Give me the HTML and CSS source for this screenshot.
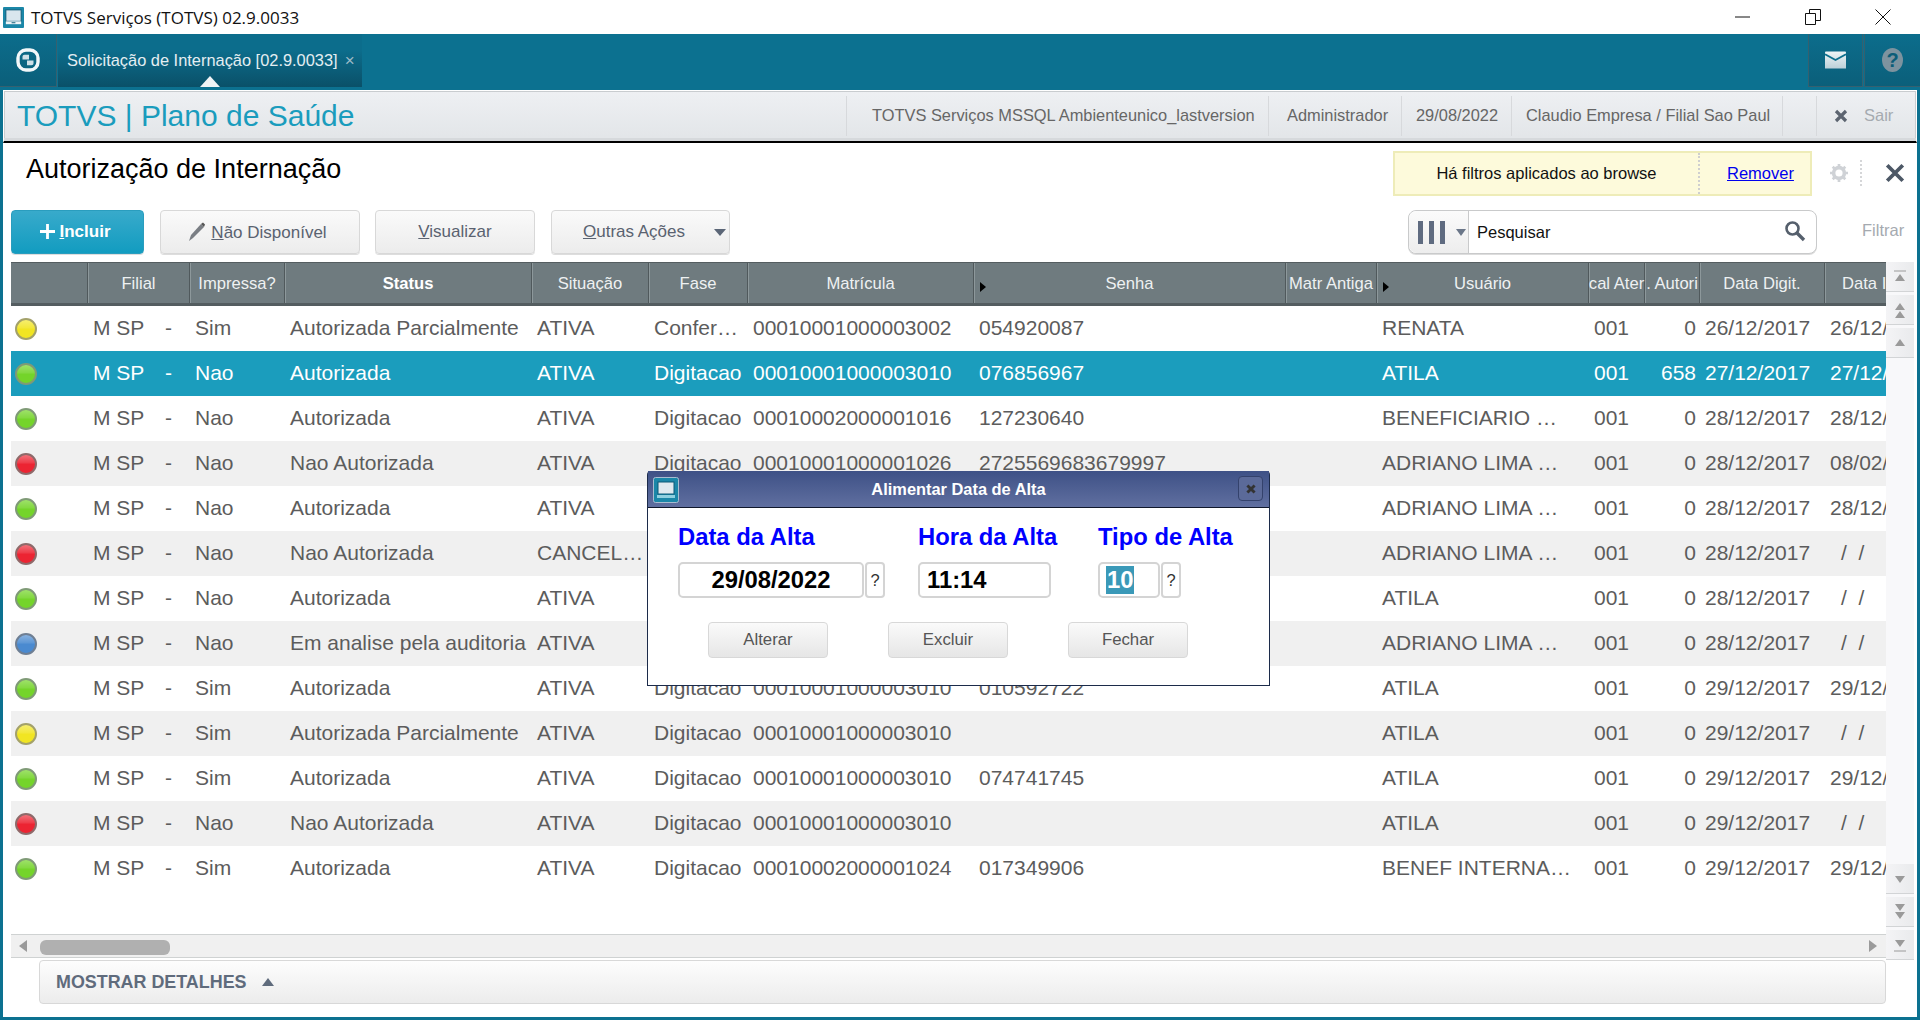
FILE: index.html
```html
<!DOCTYPE html>
<html lang="pt-BR">
<head>
<meta charset="utf-8">
<title>TOTVS Serviços (TOTVS) 02.9.0033</title>
<link rel="stylesheet" href="styles.css">
</head>
<body>
<div class="window">
  <header class="titlebar">
    <svg class="app-icon" viewBox="0 0 22 22"><rect width="22" height="22" rx="1" fill="#1b87a8"/><rect x="3" y="3" width="16" height="12" fill="#d9e6ee" stroke="#0c5b78"/><rect x="3" y="15" width="16" height="3" fill="#eef4f7"/><rect x="9" y="16" width="4" height="1" fill="#0c5b78"/></svg>
    <span class="window-title">TOTVS Serviços (TOTVS) 02.9.0033</span>
    <div class="window-controls">
      <svg viewBox="0 0 16 16" class="wc"><path d="M0 8h15" stroke="#111" fill="none"/></svg>
      <svg viewBox="0 0 16 16" class="wc"><path d="M.5 4.5h10v11H.5zM4.5 4V.5h11v11H11" stroke="#111" fill="none"/></svg>
      <svg viewBox="0 0 16 16" class="wc"><path d="M.5.5l15 15M15.5.5l-15 15" stroke="#111" fill="none"/></svg>
    </div>
  </header>

  <nav class="tabband">
    <div class="tile home">
      <svg viewBox="0 0 24 24" class="logo"><rect x="2" y="2" width="20" height="20" rx="8" fill="none" stroke="#f2f7f9" stroke-width="3.4"/><path d="M6.5 11.5V8.5Q6.5 6.8 8.5 6.8H13V11.5ZM17.5 12.5V15.5Q17.5 17.2 15.5 17.2H11V12.5Z" fill="#cfe0e7"/></svg>
    </div>
    <div class="tab">
      <span class="tab-label">Solicitação de Internação [02.9.0033]</span>
      <span class="tab-close">×</span>
    </div>
    <div class="band-fill"></div>
    <div class="tile mail">
      <svg viewBox="0 0 22 18" class="mail-icon"><defs><linearGradient id="mg" x1="0" y1="0" x2="0" y2="1"><stop offset="0" stop-color="#eef4f6"/><stop offset="1" stop-color="#bcd0d9"/></linearGradient></defs><path d="M0 1a1 1 0 0 1 1-1h20a1 1 0 0 1 1 1v17H0z" fill="url(#mg)"/><path d="M0 3l11 6 11-6" fill="none" stroke="#0c6f8d" stroke-width="2"/></svg>
    </div>
    <div class="tile help">
      <span class="help-icon">?</span>
    </div>
  </nav>

  <main class="content">
    <div class="module-bar">
      <h1 class="module-name">TOTVS | Plano de Saúde</h1>
      <div class="module-info">
        <span class="info info-env">TOTVS Serviços MSSQL Ambienteunico_lastversion</span>
        <span class="info info-user">Administrador</span>
        <span class="info info-date">29/08/2022</span>
        <span class="info info-branch">Claudio Empresa / Filial Sao Paul</span>
        <span class="info info-gap"></span>
        <span class="info-exit"><svg viewBox="0 0 14 14" class="exit-x"><path d="M2 2l10 10M12 2L2 12" stroke="#5c6470" stroke-width="3.2"/></svg>Sair</span>
      </div>
    </div>

    <section class="page-head">
      <h2 class="page-title">Autorização de Internação</h2>
      <div class="notice">
        <span class="notice-text">Há filtros aplicados ao browse</span>
        <span class="notice-link"><a href="#">Remover</a></span>
      </div>
      <svg viewBox="0 0 20 20" class="gear"><circle cx="10" cy="10" r="6" fill="none" stroke="#cfd2d6" stroke-width="4"/><path d="M10 0v4M10 16v4M0 10h4M16 10h4M3 3l3 3M14 14l3 3M17 3l-3 3M6 14l-3 3" stroke="#cfd2d6" stroke-width="3"/></svg>
      <span class="head-dots"></span>
      <svg viewBox="0 0 18 18" class="head-close"><path d="M2 2l14 14M16 2L2 16" stroke="#4d5866" stroke-width="3.4"/></svg>
    </section>

    <section class="toolbar">
      <button class="btn btn-primary"><svg viewBox="0 0 16 16" class="plus"><path d="M8 0v16M0 8h16" stroke="#fff" stroke-width="3"/></svg><u>I</u>ncluir</button>
      <button class="btn btn-nd"><svg viewBox="0 0 18 20" class="pencil"><path d="M1 19l2-6L13 2l3 3L5 16z" fill="#7a7e84"/><path d="M13 2l2-1.5 2 2L16 5z" fill="#555"/></svg><u>N</u>ão Disponível</button>
      <button class="btn btn-vis"><u>V</u>isualizar</button>
      <button class="btn btn-more"><u>O</u>utras Ações<span class="more-caret"></span></button>
      <div class="toolbar-fill"></div>
      <div class="search">
        <div class="search-mode"><span class="bars"><i></i><i></i><i></i></span><span class="caret"></span></div>
        <span class="search-text">Pesquisar</span>
        <svg viewBox="0 0 22 22" class="lens"><circle cx="8.5" cy="8.5" r="6" fill="none" stroke="#555f6c" stroke-width="2.6"/><path d="M13 13l7 7" stroke="#555f6c" stroke-width="3.4"/></svg>
      </div>
      <span class="filter-link">Filtrar</span>
    </section>

    <section class="browse">
      <div class="browse-main">
        <div class="table">
          <div class="row head">
            <div class="th"></div><div class="th">Filial</div><div class="th">Impressa?</div><div class="th th-strong">Status</div><div class="th">Situação</div><div class="th">Fase</div><div class="th">Matrícula</div><div class="th th-mark">Senha</div><div class="th">Matr Antiga</div><div class="th th-mark">Usuário</div><div class="th">cal Ater</div><div class="th">. Autori</div><div class="th">Data Digit.</div><div class="th th-left">Data I</div>
          </div>

          <div class="row"><div class="td td-led"><i class="led yellow"></i></div><div class="td fil">M SP<b>-</b></div><div class="td">Sim</div><div class="td">Autorizada Parcialmente</div><div class="td">ATIVA</div><div class="td">Confer…</div><div class="td">00010001000003002</div><div class="td">054920087</div><div class="td"></div><div class="td">RENATA</div><div class="td">001</div><div class="td num">0</div><div class="td">26/12/2017</div><div class="td">26/12/2017</div></div>
          <div class="row sel"><div class="td td-led"><i class="led green"></i></div><div class="td fil">M SP<b>-</b></div><div class="td">Nao</div><div class="td">Autorizada</div><div class="td">ATIVA</div><div class="td">Digitacao</div><div class="td">00010001000003010</div><div class="td">076856967</div><div class="td"></div><div class="td">ATILA</div><div class="td">001</div><div class="td num">658</div><div class="td">27/12/2017</div><div class="td">27/12/2017</div></div>
          <div class="row"><div class="td td-led"><i class="led green"></i></div><div class="td fil">M SP<b>-</b></div><div class="td">Nao</div><div class="td">Autorizada</div><div class="td">ATIVA</div><div class="td">Digitacao</div><div class="td">00010002000001016</div><div class="td">127230640</div><div class="td"></div><div class="td">BENEFICIARIO …</div><div class="td">001</div><div class="td num">0</div><div class="td">28/12/2017</div><div class="td">28/12/2017</div></div>
          <div class="row alt"><div class="td td-led"><i class="led red"></i></div><div class="td fil">M SP<b>-</b></div><div class="td">Nao</div><div class="td">Nao Autorizada</div><div class="td">ATIVA</div><div class="td">Digitacao</div><div class="td">00010001000001026</div><div class="td">2725569683679997</div><div class="td"></div><div class="td">ADRIANO LIMA …</div><div class="td">001</div><div class="td num">0</div><div class="td">28/12/2017</div><div class="td">08/02/2018</div></div>
          <div class="row"><div class="td td-led"><i class="led green"></i></div><div class="td fil">M SP<b>-</b></div><div class="td">Nao</div><div class="td">Autorizada</div><div class="td">ATIVA</div><div class="td"></div><div class="td"></div><div class="td"></div><div class="td"></div><div class="td">ADRIANO LIMA …</div><div class="td">001</div><div class="td num">0</div><div class="td">28/12/2017</div><div class="td">28/12/2017</div></div>
          <div class="row alt"><div class="td td-led"><i class="led red"></i></div><div class="td fil">M SP<b>-</b></div><div class="td">Nao</div><div class="td">Nao Autorizada</div><div class="td">CANCEL…</div><div class="td"></div><div class="td"></div><div class="td"></div><div class="td"></div><div class="td">ADRIANO LIMA …</div><div class="td">001</div><div class="td num">0</div><div class="td">28/12/2017</div><div class="td date-empty">/ &nbsp;/</div></div>
          <div class="row"><div class="td td-led"><i class="led green"></i></div><div class="td fil">M SP<b>-</b></div><div class="td">Nao</div><div class="td">Autorizada</div><div class="td">ATIVA</div><div class="td"></div><div class="td"></div><div class="td"></div><div class="td"></div><div class="td">ATILA</div><div class="td">001</div><div class="td num">0</div><div class="td">28/12/2017</div><div class="td date-empty">/ &nbsp;/</div></div>
          <div class="row alt"><div class="td td-led"><i class="led blue"></i></div><div class="td fil">M SP<b>-</b></div><div class="td">Nao</div><div class="td">Em analise pela auditoria</div><div class="td">ATIVA</div><div class="td"></div><div class="td"></div><div class="td"></div><div class="td"></div><div class="td">ADRIANO LIMA …</div><div class="td">001</div><div class="td num">0</div><div class="td">28/12/2017</div><div class="td date-empty">/ &nbsp;/</div></div>
          <div class="row"><div class="td td-led"><i class="led green"></i></div><div class="td fil">M SP<b>-</b></div><div class="td">Sim</div><div class="td">Autorizada</div><div class="td">ATIVA</div><div class="td">Digitacao</div><div class="td">00010001000003010</div><div class="td">010592722</div><div class="td"></div><div class="td">ATILA</div><div class="td">001</div><div class="td num">0</div><div class="td">29/12/2017</div><div class="td">29/12/2017</div></div>
          <div class="row alt"><div class="td td-led"><i class="led yellow"></i></div><div class="td fil">M SP<b>-</b></div><div class="td">Sim</div><div class="td">Autorizada Parcialmente</div><div class="td">ATIVA</div><div class="td">Digitacao</div><div class="td">00010001000003010</div><div class="td"></div><div class="td"></div><div class="td">ATILA</div><div class="td">001</div><div class="td num">0</div><div class="td">29/12/2017</div><div class="td date-empty">/ &nbsp;/</div></div>
          <div class="row"><div class="td td-led"><i class="led green"></i></div><div class="td fil">M SP<b>-</b></div><div class="td">Sim</div><div class="td">Autorizada</div><div class="td">ATIVA</div><div class="td">Digitacao</div><div class="td">00010001000003010</div><div class="td">074741745</div><div class="td"></div><div class="td">ATILA</div><div class="td">001</div><div class="td num">0</div><div class="td">29/12/2017</div><div class="td">29/12/2017</div></div>
          <div class="row alt"><div class="td td-led"><i class="led red"></i></div><div class="td fil">M SP<b>-</b></div><div class="td">Nao</div><div class="td">Nao Autorizada</div><div class="td">ATIVA</div><div class="td">Digitacao</div><div class="td">00010001000003010</div><div class="td"></div><div class="td"></div><div class="td">ATILA</div><div class="td">001</div><div class="td num">0</div><div class="td">29/12/2017</div><div class="td date-empty">/ &nbsp;/</div></div>
          <div class="row"><div class="td td-led"><i class="led green"></i></div><div class="td fil">M SP<b>-</b></div><div class="td">Sim</div><div class="td">Autorizada</div><div class="td">ATIVA</div><div class="td">Digitacao</div><div class="td">00010002000001024</div><div class="td">017349906</div><div class="td"></div><div class="td">BENEF INTERNA…</div><div class="td">001</div><div class="td num">0</div><div class="td">29/12/2017</div><div class="td">29/12/2017</div></div>
        </div>
        <div class="hscroll">
          <i class="arrow-left"></i>
          <span class="thumb"></span>
          <i class="arrow-right"></i>
        </div>
      </div>
      <div class="vscroll">
        <div class="vgroup">
          <span class="vbtn"><svg viewBox="0 0 14 18"><path d="M1 3h12" stroke="#9a9a9a"/><path d="M2 13l5-7 5 7z" fill="#9a9a9a"/></svg></span>
          <span class="vbtn"><svg viewBox="0 0 14 18"><path d="M2 9l5-7 5 7zM2 17l5-7 5 7z" fill="#9a9a9a"/></svg></span>
          <span class="vbtn"><svg viewBox="0 0 14 18"><path d="M2 12l5-7 5 7z" fill="#9a9a9a"/></svg></span>
        </div>
        <div class="vgroup">
          <span class="vbtn"><svg viewBox="0 0 14 18"><path d="M2 6l5 7 5-7z" fill="#9a9a9a"/></svg></span>
          <span class="vbtn"><svg viewBox="0 0 14 18"><path d="M2 1l5 7 5-7zM2 9l5 7 5-7z" fill="#9a9a9a"/></svg></span>
          <span class="vbtn"><svg viewBox="0 0 14 18"><path d="M2 4l5 7 5-7z" fill="#9a9a9a"/><path d="M1 15h12" stroke="#9a9a9a"/></svg></span>
        </div>
      </div>
    </section>

    <section class="details">
      <span class="details-label">MOSTRAR DETALHES</span>
      <i class="details-caret"></i>
    </section>
  </main>

  <div class="dialog">
    <div class="dialog-title">
      <svg class="dialog-icon" viewBox="0 0 26 26"><rect x=".5" y=".5" width="25" height="25" rx="2" fill="#1b87a8" stroke="#a9bdd0"/><rect x="5" y="5" width="16" height="12" fill="#dfe9ef" stroke="#0c5b78"/><rect x="4" y="18" width="18" height="3" fill="#8fd0e0"/></svg>
      <span class="dialog-caption">Alimentar Data de Alta</span>
      <span class="dialog-close"><svg viewBox="0 0 10 10"><path d="M2 2l6 6M8 2L2 8" stroke="#333" stroke-width="2.4"/></svg></span>
    </div>
    <div class="dialog-body">
      <div class="fields">
        <div class="field f-date">
          <label class="field-label">Data da Alta</label>
          <div class="field-row"><span class="input input-date">29/08/2022</span><span class="lookup">?</span></div>
        </div>
        <div class="field f-time">
          <label class="field-label">Hora da Alta</label>
          <div class="field-row"><span class="input input-time">11:14</span></div>
        </div>
        <div class="field f-type">
          <label class="field-label">Tipo de Alta</label>
          <div class="field-row"><span class="input input-type"><mark class="selected">10</mark></span><span class="lookup">?</span></div>
        </div>
      </div>
      <div class="dialog-actions">
        <button class="dbtn">Alterar</button>
        <button class="dbtn">Excluir</button>
        <button class="dbtn">Fechar</button>
      </div>
    </div>
  </div>
</div>
</body>
</html>
```
FILE: styles.css
```css
* { box-sizing: border-box; }
html, body { margin: 0; padding: 0; height: 100%; }
body { width: 1920px; height: 1020px; overflow: hidden; font-family: "Liberation Sans", Arial, sans-serif; background: #fff; }
h1, h2 { margin: 0; font-weight: normal; }
button { font-family: inherit; cursor: default; }

.window { position: relative; width: 1920px; height: 1020px; display: flex; flex-direction: column; }

/* title bar */
.titlebar { height: 34px; flex: none; display: flex; align-items: center; padding-left: 3px; background: #fff; }
.app-icon { width: 21px; height: 21px; flex: none; }
.window-title { margin-left: 7px; font-family: "Open Sans", sans-serif; font-size: 17px; color: #111; }
.window-controls { margin-left: auto; display: flex; gap: 54px; padding-right: 29px; align-items: center; }
.wc { width: 16px; height: 16px; display: block; }

/* tab band */
.tabband { height: 56px; flex: none; display: flex; background: #0c7190; }
.tile { height: 53px; display: flex; align-items: center; justify-content: center; background: linear-gradient(#0c6d8c, #0b5f7a); border-bottom: 1px solid #35606f; }
.home { width: 57px; margin-right: 1px; border-right: 1px solid #35606f; }
.logo { width: 24px; height: 24px; }
.tab { position: relative; width: 304px; height: 53px; display: flex; align-items: center; padding-left: 9px; background: linear-gradient(#0c6d8c 30%, #0a5068); }
.tab::after { content: ""; position: absolute; left: 142px; bottom: 0; border: 10px solid transparent; border-top: 0; border-bottom: 11px solid #f0f3f5; }
.tab-label { font-size: 16.4px; color: #e4eef2; white-space: nowrap; }
.tab-close { margin-left: 7px; font-size: 17px; color: #9dbbc8; }
.band-fill { flex: 1; }
.mail { width: 55px; margin-right: 1px; border-left: 1px solid #35606f; border-right: 1px solid #35606f; }
.mail-icon { width: 21px; height: 18px; }
.help { width: 56px; border-left: 1px solid #35606f; }
.help-icon { width: 21px; height: 24px; border-radius: 50%; background: #7d939f; color: #0c5d78; font-weight: bold; font-size: 20px; line-height: 24px; text-align: center; }

/* content frame */
.content { flex: 1; min-height: 0; border: solid #0c7190; border-width: 0 3px 3px; display: flex; flex-direction: column; background: #fff; }

.module-bar { height: 53px; flex: none; display: flex; align-items: center; padding: 1px 0 2px 13px; border: 1px solid #fff; border-bottom: 2px solid #000; background: linear-gradient(#eef0f3, #e2e5e8); box-shadow: inset 0 -3px 0 #d6d9dc, inset 0 0 0 1px #c9cccf; }
.module-name { font-size: 30px; color: #1a9cbd; white-space: nowrap; }
.module-info { margin-left: auto; display: flex; height: 40px; align-items: center; }
.info { height: 40px; display: flex; align-items: center; border-left: 1px solid #d7d9dc; font-size: 16.4px; color: #666; white-space: nowrap; }
.info-env { width: 422px; padding-left: 25px; }
.info-user { width: 133px; padding-left: 18px; }
.info-date { width: 110px; padding-left: 14px; }
.info-branch { width: 271px; padding-left: 14px; }
.info-gap { width: 34px; }
.info-exit { width: 100px; height: 40px; display: flex; align-items: center; padding-left: 17px; border-left: 1px solid #d7d9dc; font-size: 16.5px; color: #a5aab0; }
.exit-x { width: 14px; height: 14px; margin-right: 16px; }

.page-head { height: 67px; flex: none; display: flex; align-items: flex-start; padding: 8px 0 0 23px; }
.page-title { margin-top: 1px; font-size: 27px; line-height: 34px; color: #000; white-space: nowrap; }
.notice { margin-left: auto; width: 419px; height: 45px; display: flex; align-items: center; background: #fdfadb; border: 2px solid #eeecb8; font-size: 16.5px; color: #111; }
.notice-text { flex: 1; text-align: center; }
.notice-link { width: 112px; height: 100%; display: flex; align-items: center; padding-left: 27px; border-left: 2px dotted #cfcfd0; }
.notice-link a { color: #0000ee; }
.gear { width: 18px; height: 18px; margin: 13px 0 0 18px; }
.head-dots { width: 0; height: 26px; margin: 9px 0 0 12px; border-left: 2px dotted #d5d6d8; }
.head-close { width: 20px; height: 20px; margin: 12px 12px 0 23px; }

/* toolbar */
.toolbar { height: 44px; flex: none; display: flex; align-items: stretch; padding-left: 8px; gap: 16px; }
.btn { position: relative; height: 44px; border: 1px solid #d8d8d8; border-radius: 4px; background: linear-gradient(#fafafa, #ececec); color: #5a6270; font-size: 17px; padding: 0; box-shadow: 0 1px 0 #ddd; }
.btn u { text-decoration: underline; }
.btn-primary { width: 133px; padding-right: 4px; background: linear-gradient(#38aacb, #129cc0); border-color: #2a9dbe; color: #fff; font-weight: bold; }
.plus { width: 15px; height: 15px; margin-right: 4px; vertical-align: -2px; }
.btn-nd { width: 200px; margin-right: -1px; padding-right: 5px; }
.pencil { width: 18px; height: 20px; margin-right: 5px; vertical-align: -4px; }
.btn-vis { width: 160px; }
.btn-more { width: 179px; padding-right: 13px; }
.more-caret { position: absolute; right: 3px; top: 18px; border: 6px solid transparent; border-bottom: 0; border-top: 7px solid #5b6677; }
.toolbar-fill { flex: 1; }
.search { width: 409px; height: 44px; display: flex; align-items: center; border: 1px solid #c9cacb; border-radius: 8px; background: #fff; box-shadow: 0 1px 0 #ddd; font-size: 16.5px; color: #111; }
.search-mode { width: 60px; height: 100%; display: flex; align-items: center; padding-left: 9px; border-right: 1px solid #c9cacb; border-radius: 8px 0 0 8px; background: linear-gradient(#fbfbfb, #ededed); }
.bars { display: flex; gap: 6px; }
.bars i { display: block; width: 5px; height: 23px; background: #5f6b80; }
.caret { margin-left: 11px; border: 5px solid transparent; border-bottom: 0; border-top: 7px solid #6b7789; }
.search-text { margin-left: 8px; }
.lens { width: 22px; height: 22px; margin: -2px 10px 0 auto; }
.filter-link { width: 84px; padding-left: 29px; line-height: 41px; font-size: 16.5px; color: #a5aab0; }

/* browse */
.browse { margin-top: 8px; height: 698px; flex: none; display: flex; padding-left: 8px; }
.browse-main { width: 1875px; display: flex; flex-direction: column; }
.table { height: 672px; overflow: hidden; background: #fff; }
.row { display: grid; grid-template-columns: 77px 102px 95px 247px 117px 99px 226px 312px 91px 212px 56px 55px 125px 150px; width: 1964px; height: 45px; align-items: center; }
.row.alt { background: #f0f0f0; }
.row.sel { background: #1b9dbd; color: #fff; }
.row.sel .td { color: #fff; }
.row.head { height: 44px; align-items: stretch; background: #6f7b7f; border-top: 1px solid #545d60; border-bottom: 3px solid #545d60; }
.th { position: relative; display: flex; align-items: center; justify-content: center; padding-top: 2px; white-space: nowrap; border-right: 1px solid #50595c; box-shadow: 1px 0 0 #8d989b; font-size: 16.6px; color: #eef1f2; }
.th-strong { font-weight: bold; color: #fff; }
.th-left { justify-content: flex-start; padding-left: 17px; }
.th-mark::before { content: ""; position: absolute; left: 6px; top: 19px; border: 5px solid transparent; border-right: 0; border-left: 6px solid #000; }
.td { padding-left: 5px; padding-bottom: 2px; font-size: 21px; color: #5c5c5c; white-space: nowrap; overflow: hidden; }
.td-led { padding: 0 0 0 4px; overflow: visible; }
.fil { display: flex; justify-content: space-between; padding-right: 18px; }
.fil b { font-weight: normal; }
.td.num { padding-left: 0; padding-right: 4px; text-align: right; }
.td.date-empty { padding-left: 16px; }
.led { display: block; width: 22px; height: 22px; border-radius: 50%; border: 2px solid #8c8c8c; }
.green { background: linear-gradient(rgba(255,255,255,.3), rgba(255,255,255,.1) 45%, transparent 50%), #74d42a; border-color: #7f9a76; }
.yellow { background: linear-gradient(rgba(255,255,255,.35), rgba(255,255,255,.1) 45%, transparent 50%), #f1e522; border-color: #a3a16a; }
.red { background: linear-gradient(rgba(255,255,255,.35), rgba(255,255,255,.1) 45%, transparent 50%), #ec2432; border-color: #8e6a6a; }
.blue { background: linear-gradient(rgba(255,255,255,.35), rgba(255,255,255,.1) 45%, transparent 50%), #4a8ad0; border-color: #6f7f93; }

.hscroll { height: 24px; position: relative; display: flex; align-items: center; background: #f0f0f0; border-top: 1px solid #cfd2d2; border-bottom: 1px solid #cfd2d2; }
.thumb { position: absolute; left: 29px; top: 5px; width: 130px; height: 15px; border-radius: 6px; background: #b0b0b0; }
.arrow-left { margin-left: 8px; border: 6px solid transparent; border-left: 0; border-right: 8px solid #9a9a9a; }
.arrow-right { margin-left: auto; margin-right: 9px; border: 6px solid transparent; border-right: 0; border-left: 8px solid #9a9a9a; }

.vscroll { width: 28px; display: flex; flex-direction: column; justify-content: space-between; background: #f8f8fa; }
.vgroup { display: flex; flex-direction: column; gap: 3px; }
.vbtn { height: 30px; display: flex; align-items: center; justify-content: center; background: linear-gradient(90deg, #f4f4f6, #e9eaec); border-bottom: 1px solid #d2d4d6; }
.vbtn svg { width: 14px; height: 18px; }

.details { margin: 0 31px 0 36px; height: 44px; flex: none; display: flex; align-items: center; padding-left: 16px; border: 1px solid #d8d8d8; border-radius: 4px; background: linear-gradient(#fdfdfd, #ececec); }
.details-label { font-size: 17.9px; font-weight: bold; color: #5f6b7c; }
.details-caret { margin-left: 15px; border: 6px solid transparent; border-top: 0; border-bottom: 8px solid #5f6b7c; }

/* dialog */
.dialog { position: absolute; left: 647px; top: 471px; width: 623px; height: 215px; display: flex; flex-direction: column; background: #fff; border: 1px solid #1c2b4a; border-top: 0; border-radius: 4px 4px 0 0; }
.dialog-title { height: 37px; flex: none; position: relative; display: flex; align-items: center; justify-content: center; background: linear-gradient(#3e5186, #606fa0); border-bottom: 1px solid #10182c; }
.dialog-icon { position: absolute; left: 5px; top: 6px; width: 26px; height: 26px; }
.dialog-caption { font-size: 16.4px; font-weight: bold; color: #fff; }
.dialog-close { position: absolute; right: 6px; top: 5px; width: 25px; height: 25px; display: flex; align-items: center; justify-content: center; border: 1px solid #34426c; border-radius: 4px; background: #5b6a99; }
.dialog-close svg { width: 12px; height: 12px; }
.dialog-body { flex: 1; padding: 14px 30px 0; }
.fields { display: flex; }
.field-label { display: block; height: 40px; line-height: 30px; font-size: 23.8px; font-weight: bold; color: #0000ff; white-space: nowrap; }
.field-row { display: flex; align-items: flex-start; gap: 1px; }
.f-date { width: 240px; }
.f-time { width: 180px; }
.input { height: 36px; display: flex; align-items: center; border: 2px solid #d4d4d4; border-radius: 5px; background: #fff; font-size: 23.8px; font-weight: bold; color: #000; }
.input-date { width: 186px; justify-content: center; }
.input-time { width: 133px; padding-left: 7px; }
.input-type { width: 62px; padding-left: 6px; }
.selected { background: #3a99b8; color: #fff; padding: 0 1px; }
.lookup { width: 20px; height: 36px; display: flex; align-items: center; justify-content: center; border: 2px solid #d4d4d4; border-radius: 4px; font-size: 16.5px; color: #333; }
.dialog-actions { display: flex; gap: 60px; margin-top: 24px; padding-left: 30px; }
.dbtn { width: 120px; height: 36px; padding: 0; border: 1px solid #d8d8d8; border-radius: 4px; background: linear-gradient(#fafafa, #e6e6e6); font-size: 16.8px; color: #555; }
```
